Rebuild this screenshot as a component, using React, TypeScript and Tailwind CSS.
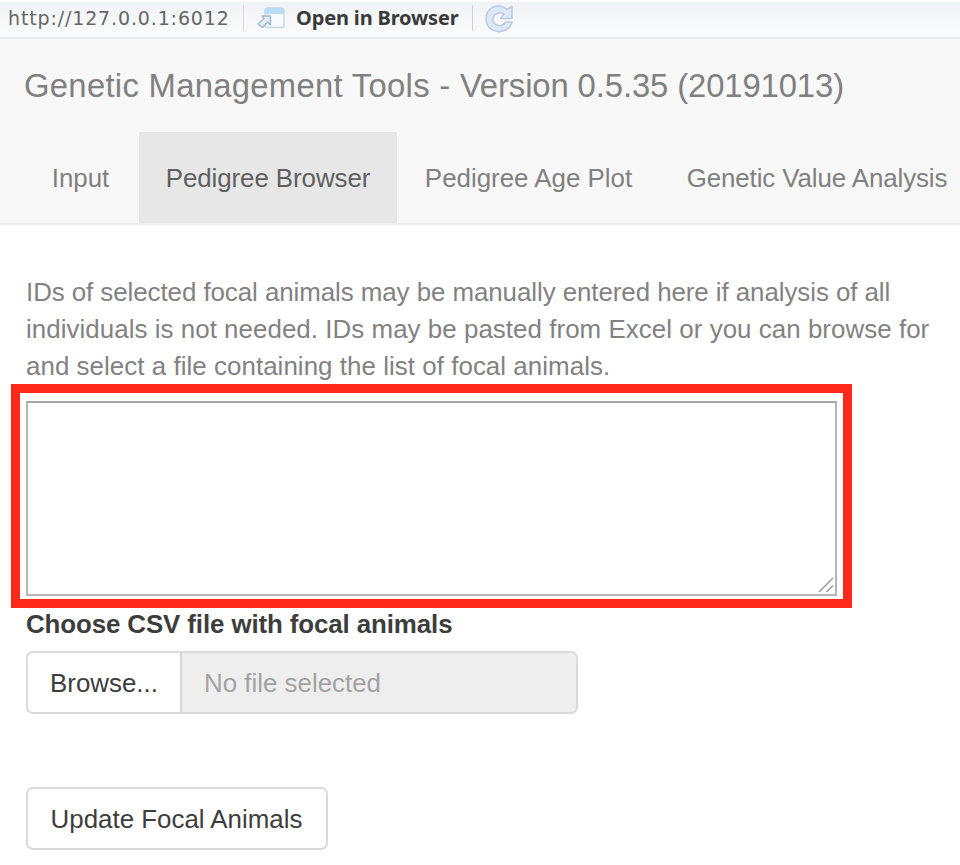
const tabs = [
  { label: "Input", className: "w-[113px] pr-[4px] text-[#808080]" },
  { label: "Pedigree Browser", className: "w-[258px] bg-[#e7e7e7] text-[#606060] tracking-[-0.08px]" },
  { label: "Pedigree Age Plot", className: "w-[262px] pl-[1px] text-[#808080]" },
  { label: "Genetic Value Analysis", className: "w-[316px] text-[#808080] tracking-[-0.1px]" },
];

function OpenIcon() {
  return (
    <svg className="ml-3 h-[24px] w-[30px] shrink-0" viewBox="0 0 30 24" fill="none">
      <path d="M9 5q0-3 3-3h13q3 0 3 3v14q0 2.500-2.500 2.500H11q-2 0-2-2z" fill="#f7fafe" stroke="#c8d6e6" strokeWidth="1.500" />
      <path d="M9 8V4.500Q9 2 12 2h13q3 0 3 3v3z" fill="#b9dcf8" />
      <path d="M6 10h8.500v9l-3-3-5 5.500-4.500-3.500 6-5.500z" fill="#e3edf7" stroke="#a9bacb" strokeWidth="1.500" strokeLinejoin="round" />
    </svg>
  );
}

function RefreshIcon() {
  return (
    <svg className="mt-[2px] ml-[10px] h-[32px] w-[32px] shrink-0" viewBox="0 0 32 32" fill="none">
      <path
        d="M24 6.500 29 3.500V15.500H17.500l3.500-4.500C15.500 8 10 11 10 16.500c0 6 9 8.500 12.500 2.500H29C26 33 3 31.500 3 16 3 3 16 0 24 6.500z"
        fill="#dce8fa"
        stroke="#bccade"
        strokeWidth="1.500"
        strokeLinejoin="round"
      />
    </svg>
  );
}

export default function App() {
  return (
    <div className="h-[865px] w-[960px] overflow-hidden bg-white pt-[2px] font-['Liberation_Sans',Arial,sans-serif] text-[25.9px] leading-[37px] text-[#3d3d3d]">
      <div className="flex h-[37px] items-center border-b-2 border-[#e6e8e9] bg-linear-to-b from-[#f0f3f5] to-[#fbfcfc] pb-1">
        <span className="ml-2 w-[221px] whitespace-nowrap font-['DejaVu_Sans',sans-serif] text-[19px] leading-6 tracking-[0.86px] text-[#666]">http://127.0.0.1:6012</span>
        <span className="ml-[14px] h-[26px] w-px bg-[#d6d9db]" />
        <OpenIcon />
        <span className="ml-[10px] w-[162px] whitespace-nowrap font-['Noto_Sans',sans-serif] text-[20px] leading-6 font-bold tracking-[-0.15px] text-[#3a3a3a]">Open in Browser</span>
        <span className="ml-[14px] h-[26px] w-px bg-[#d0d3d5]" />
        <RefreshIcon />
      </div>
      <nav className="h-[186px] border-b-2 border-[#ededed] bg-[#f8f8f8]">
        <div className="h-[93px] pt-[28px] pl-6 text-[32.8px] whitespace-nowrap text-[#808080]">
          <span className="tracking-[0.3px]">Genetic Management Tools - </span>
          <span className="tracking-[-0.1px]">Version 0.5.35 (20191013)</span>
        </div>
        <div className="flex h-[91px] pl-[26px]">
          {tabs.map((t) => (
            <div key={t.label} className={`flex h-full shrink-0 items-center justify-center pt-[2px] whitespace-nowrap ${t.className}`}>
              {t.label}
            </div>
          ))}
        </div>
      </nav>
      <main className="flex flex-col items-start pt-[49px]">
        <p className="ml-[26px] whitespace-nowrap text-[#828282]">
          <span className="tracking-[-0.065px]">IDs of selected focal animals may be manually entered here if analysis of all</span>
          <br />
          <span className="tracking-[0.05px]">individuals is not needed. IDs may be pasted from Excel or you can browse for</span>
          <br />
          <span className="tracking-[0.05px]">and select a file containing the list of focal animals.</span>
        </p>
        <div className="ml-[11px] -mt-px h-[224px] w-[841px] border-9 border-[#ff2819] px-[6px] pt-[8px] pb-[3px]">
          <div className="flex h-full w-full items-end justify-end border-2 border-[#b5b5b5] border-t-[#a5a5a5] bg-white">
            <svg className="mr-[1px] mb-[1px] h-4 w-4" viewBox="0 0 16 16" stroke="#9a9a9a" strokeWidth="1.500">
              <path d="M1 15 15 1M8.500 15 15 8.500" />
            </svg>
          </div>
        </div>
        <div className="ml-[26px] -mt-[2px] font-bold tracking-[-0.11px] whitespace-nowrap">Choose CSV file with focal animals</div>
        <div className="mt-[8px] ml-[26px] flex h-[63px] w-[552px] items-center overflow-hidden rounded-[7px] border-2 border-[#dadada] bg-[#eee] whitespace-nowrap">
          <div className="flex h-full w-[154px] items-center border-r-2 border-[#d6d6d6] bg-white pt-px pl-[22px]">Browse...</div>
          <div className="pt-px pl-[22px] text-[#a3a3a3]">No file selected</div>
        </div>
        <div className="mt-[73px] ml-[26px] flex h-[63px] w-[302px] items-center justify-center rounded-[7px] border-2 border-[#dadada] pt-px pr-px whitespace-nowrap">
          Update Focal Animals
        </div>
      </main>
    </div>
  );
}
